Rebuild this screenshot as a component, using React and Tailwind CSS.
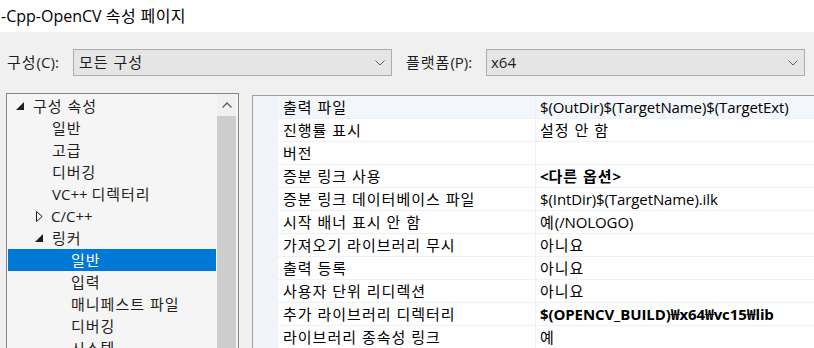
import React from "react";

const F = "font-['Open_Sans','Noto_Sans_CJK_KR',sans-serif]";

function K({ s, t = "tracking-[1px]" }) {
  const parts = s.split(/([\uAC00-\uD7A3]+(?:\s+[\uAC00-\uD7A3]+)*)/);
  return (
    <span className="whitespace-pre">
      {parts.map((p, i) =>
        /[\uAC00-\uD7A3]/.test(p) ? (
          <span key={i} className={t}>
            {p}
          </span>
        ) : (
          <React.Fragment key={i}>{p}</React.Fragment>
        )
      )}
    </span>
  );
}

function Chevron() {
  return (
    <svg width="10" height="6" viewBox="0 0 10 6" className="shrink-0">
      <path d="M0.5 0.5 L5 5 L9.5 0.5" fill="none" stroke="#606060" strokeWidth="1" />
    </svg>
  );
}

function TriDown() {
  return (
    <svg width="8" height="8" viewBox="0 0 8 8" className="shrink-0">
      <polygon points="8,0 8,8 0,8" fill="#1e1e1e" />
    </svg>
  );
}

function TriRight() {
  return (
    <svg width="7" height="11" viewBox="0 0 7 11" className="shrink-0">
      <polygon points="0.5,0.5 6.2,5.5 0.5,10.5" fill="none" stroke="#1e1e1e" strokeWidth="1" />
    </svg>
  );
}

const tree = [
  { t: "구성 속성", kind: "root" },
  { t: "일반", kind: "l1" },
  { t: "고급", kind: "l1" },
  { t: "디버깅", kind: "l1" },
  { t: "VC++ 디렉터리", kind: "l1" },
  { t: "C/C++", kind: "l1c" },
  { t: "링커", kind: "l1e" },
  { t: "일반", kind: "l2", sel: true },
  { t: "입력", kind: "l2" },
  { t: "매니페스트 파일", kind: "l2" },
  { t: "디버깅", kind: "l2" },
  { t: "시스템", kind: "l2" },
];

const rows = [
  ["출력 파일", "$(OutDir)$(TargetName)$(TargetExt)"],
  ["진행률 표시", "설정 안 함"],
  ["버전", ""],
  ["증분 링크 사용", "<다른 옵션>", true],
  ["증분 링크 데이터베이스 파일", "$(IntDir)$(TargetName).ilk"],
  ["시작 배너 표시 안 함", "예(/NOLOGO)"],
  ["가져오기 라이브러리 무시", "아니요"],
  ["출력 등록", "아니요"],
  ["사용자 단위 리디렉션", "아니요"],
  ["추가 라이브러리 디렉터리", "$(OPENCV_BUILD)₩x64₩vc15₩lib", true],
  ["라이브러리 종속성 링크", "예"],
];

function TreeRow({ item }) {
  const base =
    "h-[22px] flex items-center mx-[1px] whitespace-nowrap text-[15px] " +
    (item.sel ? "bg-[#0078d7] text-white" : "text-[#1e1e1e]");
  const txt = <K s={item.t} />;
  if (item.kind === "root")
    return (
      <div className={base + " pl-[8px] gap-[9px]"}>
        <TriDown />
        {txt}
      </div>
    );
  if (item.kind === "l1c")
    return (
      <div className={base + " pl-[28px] gap-[8px]"}>
        <TriRight />
        {txt}
      </div>
    );
  if (item.kind === "l1e")
    return (
      <div className={base + " pl-[27px] gap-[9px]"}>
        <TriDown />
        {txt}
      </div>
    );
  if (item.kind === "l1")
    return <div className={base + " pl-[44px]"}>{txt}</div>;
  return <div className={base + " pl-[63px]"}>{txt}</div>;
}

export default function App() {
  return (
    <div className={"w-[814px] h-[348px] overflow-hidden bg-[#f0f0f0] flex flex-col " + F}>
      <div className="h-[32px] shrink-0 bg-white flex items-center pl-[1px] text-[16px] text-black whitespace-nowrap">
        <K s="-Cpp-OpenCV 속성 페이지" t="tracking-[0.4px]" />
      </div>

      <div className="mt-[17px] h-[27px] shrink-0 flex items-center text-[15px] text-[#1e1e1e]">
        <div className="w-[73px] pl-[7px] whitespace-nowrap">
          <K s="구성(C):" />
        </div>
        <div className="w-[319px] h-[27px] bg-[#e5e5e5] border border-[#adadad] flex items-center justify-between pl-[5px] pr-[6px]">
          <K s="모든 구성" />
          <Chevron />
        </div>
        <div className="w-[94px] pl-[14px] whitespace-nowrap">
          <K s="플랫폼(P):" />
        </div>
        <div className="w-[319px] h-[27px] bg-[#e5e5e5] border border-[#adadad] flex items-center justify-between pl-[4px] pr-[6px]">
          <span>x64</span>
          <Chevron />
        </div>
      </div>

      <div className="mt-[17px] flex flex-1 min-h-0 items-start">
        <div className="ml-[6px] w-[233px] h-[300px] shrink-0 border border-[#828790] bg-[#f5f5f5] flex">
          <div className="flex-1 pt-[1px] overflow-hidden">
            {tree.map((it, i) => (
              <TreeRow key={i} item={it} />
            ))}
          </div>
          <div className="w-[19px] mr-[2px] flex flex-col bg-[#f0f0f0]">
            <div className="h-[22px] flex items-center justify-center">
              <svg width="10" height="6" viewBox="0 0 10 6">
                <path d="M0.5 5.5 L5 1 L9.5 5.5" fill="none" stroke="#606060" strokeWidth="1.4" />
              </svg>
            </div>
            <div className="flex-1 bg-[#cdcdcd]" />
          </div>
        </div>

        <div className="ml-[13px] mt-[2px] flex-1 h-[300px] border-l border-t border-[#a0a0a0] bg-white flex">
          <div className="w-[25px] shrink-0 bg-[#f0f4fa]" />
          <div className="flex-1 flex flex-col">
            {rows.map(([n, v, b], i) => (
              <div
                key={i}
                className={
                  "h-[23px] shrink-0 flex border-b border-[#eef2f8] text-[15px] text-black whitespace-nowrap " +
                  (i === 0 ? "bg-[#f3f6fb]" : "bg-white")
                }
              >
                <div className="w-[258px] shrink-0 pl-[5px] flex items-center border-r border-[#eef2f8]">
                  <K s={n} />
                </div>
                <div className={"flex-1 pl-[4px] flex items-center tracking-[-0.1px] " + (b ? "font-bold" : "")}>
                  <K s={v} />
                </div>
              </div>
            ))}
          </div>
        </div>
      </div>
    </div>
  );
}
